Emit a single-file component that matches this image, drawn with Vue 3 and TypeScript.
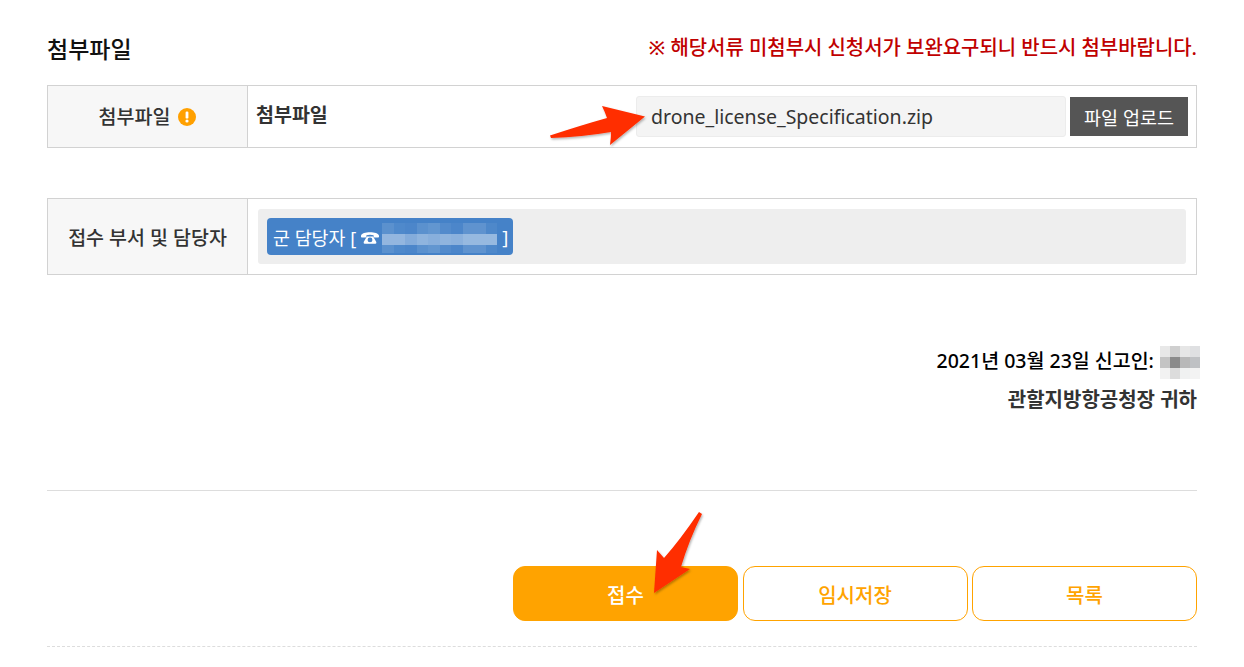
<template>
  <div class="page">
    <div class="head">
      <h3 class="title">첨부파일</h3>
      <p class="notice">※ 해당서류 미첨부시 신청서가 보완요구되니 반드시 첨부바랍니다.</p>
    </div>

    <div class="row row-file">
      <div class="label label-file">
        첨부파일
        <svg class="warn" width="18" height="18" viewBox="0 0 18 18">
          <circle cx="9" cy="9" r="9" fill="#ffa000" />
          <rect x="7.6" y="3.6" width="2.8" height="7" rx="1.2" fill="#fff" />
          <circle cx="9" cy="13" r="1.6" fill="#fff" />
        </svg>
      </div>
      <div class="cell cell-file">
        <strong class="file-name">첨부파일</strong>
        <div class="file-box">
          <div class="file-input">drone_license_Specification.zip</div>
          <button class="upload">파일 업로드</button>
        </div>
      </div>
    </div>

    <div class="row row-dept">
      <div class="label">접수 부서 및 담당자</div>
      <div class="cell">
        <div class="dept-box">
          <span class="tag">
            군 담당자 [
            <svg class="phone" width="18" height="13" viewBox="0 0 20 14">
              <path fill="#fff" d="M0 5C1 0 19 0 20 5V6.5Q20 7 19 7H15Q14 7 14 6V4.5C12 3.6 8 3.6 6 4.5V6Q6 7 5 7H1Q0 7 0 6.5Z" />
              <path fill="#fff" fill-rule="evenodd" d="M6.5 6H13.5L17 12Q17.5 14 16 14H4Q2.5 14 3 12ZM10 7A2.7 2.7 0 1 0 10 12.4A2.7 2.7 0 1 0 10 7Z" />
            </svg>
            <span class="blur blur-tag">
              <i v-for="(c, i) in tagBlur" :key="i" :style="{ background: c }"></i>
            </span>
            ]
          </span>
        </div>
      </div>
    </div>

    <div class="sign">
      <p class="date">
        2021년 03월 23일 신고인:
        <span class="blur blur-name">
          <i v-for="(c, i) in nameBlur" :key="i" :style="{ background: c }"></i>
        </span>
      </p>
      <p class="to">관할지방항공청장 귀하</p>
    </div>

    <div class="actions">
      <button class="btn primary">접수</button>
      <button class="btn">임시저장</button>
      <button class="btn">목록</button>
    </div>

    <svg class="arrow" width="1244" height="667" viewBox="0 0 1244 667">
      <defs>
        <filter id="sh" x="-20%" y="-20%" width="140%" height="140%">
          <feDropShadow dx="1" dy="1.5" stdDeviation="1" flood-color="#000" flood-opacity="0.3" />
        </filter>
      </defs>
      <path d="M550 135.500 Q582 125 607 118 Q605 112 602 106 L645 116.500 L610 145 Q611 138 611 132 Q582 137 551 138Z" fill="#ff2d00" filter="url(#sh)" />
      <path d="M699 512 L702 514 Q689 540 681 567 L690 569 L654 593 L657 550 L664 558 Q680 540 699 512Z" fill="#ff2d00" filter="url(#sh)" />
    </svg>
  </div>
</template>

<script setup lang="ts">
const tagCols = [0.12, 0.06, 0.04, 0.12, 0.16, 0.08, 0.04, 0.14, 0.14, 0.05]
const tagMid = [0.42, 0.42, 0.34, 0.4, 0.36, 0.4, 0.38, 0.44, 0.44, 0.44]
const mix = (a: number) => `rgba(255,255,255,${a})`

// три ряда пикселей, средний светлее
const tagBlur: string[] = [...tagCols.map(mix), ...tagMid.map(mix), ...tagCols.map(mix)]

const nameBlur: string[] = [
  '#e8e8e8', '#cfcfcf', '#e6e6e6', '#dfe0e2',
  '#c4c4c4', '#8a8a8a', '#b8b8b8', '#bfc1c4',
  '#f2f2f2', '#dcdcdc', '#f0f1f1', '#f3f3f3',
]
</script>

<style>
html,
body {
  background: #fff;
}
</style>

<style scoped>
.page {
  position: relative;
  width: 1244px;
  height: 667px;
  box-sizing: border-box;
  padding: 0 47px;
  overflow: hidden;
  font-family: "Noto Sans", "Noto Sans CJK KR", sans-serif;
  color: #333;
}
.head {
  display: flex;
  justify-content: space-between;
  align-items: center;
  height: 85px;
  padding-top: 8px;
  box-sizing: border-box;
}
.title {
  margin: 2px 0 0;
  font-size: 23px;
  font-weight: 500;
  color: #111;
}
.notice {
  margin: -1px 0 0;
  font-size: 19.95px;
  font-weight: 500;
  color: #c00000;
}
.row {
  display: grid;
  grid-template-columns: 200px 1fr;
  border: 1px solid #d2d2d2;
}
.row-file {
  height: 63px;
  box-sizing: border-box;
}
.row-dept {
  height: 77px;
  box-sizing: border-box;
  margin-top: 50px;
}
.label {
  display: flex;
  align-items: center;
  justify-content: center;
  gap: 8px;
  background: #f7f7f7;
  border-right: 1px solid #d2d2d2;
  font-size: 19.5px;
  font-weight: 500;
  color: #333;
  box-sizing: border-box;
}
.label-file {
  padding-bottom: 2px;
}
.warn {
  margin-top: 2px;
}
.cell {
  padding: 10px;
}
.cell-file {
  display: flex;
  justify-content: space-between;
  padding: 10px 8px;
}
.file-name {
  font-size: 19.5px;
  font-weight: 700;
  line-height: 38px;
}
.file-box {
  display: flex;
  gap: 4px;
  align-items: center;
}
.file-input {
  width: 430px;
  height: 41px;
  box-sizing: border-box;
  padding-left: 14px;
  background: #f4f4f4;
  border: 1px solid #ececec;
  border-radius: 3px;
  font-size: 19.5px;
  line-height: 39px;
  color: #333;
}
.upload {
  width: 118px;
  height: 39px;
  padding: 0;
  border: 0;
  background: #555;
  color: #fff;
  font-family: inherit;
  font-size: 18.5px;
}
.dept-box {
  height: 55px;
  box-sizing: border-box;
  padding: 9px;
  background: #eee;
  border-radius: 3px;
}
.tag {
  display: inline-flex;
  align-items: center;
  gap: 3px;
  height: 37px;
  padding: 0 5px 0 6px;
  background: #4582c8;
  border-radius: 4px;
  color: #fff;
  font-size: 18.4px;
  white-space: nowrap;
}
.phone {
  margin: 2px 0 0 2px;
}
.blur {
  display: inline-grid;
}
.blur i {
  display: block;
}
.blur-tag {
  grid-template-columns: repeat(10, 11.5px);
  grid-template-rows: 11px 11px 8px;
  margin: 2px 2px 0 0;
}
.blur-name {
  grid-template-columns: repeat(4, 10px);
  grid-template-rows: repeat(3, 11px);
  vertical-align: middle;
  margin-left: 1px;
}
.sign {
  display: flex;
  flex-direction: column;
  align-items: flex-end;
  margin-top: 70px;
  margin-right: -3px;
}
.date {
  margin: 0;
  font-size: 19.5px;
  font-weight: 500;
  line-height: 32px;
  color: #000;
}
.to {
  margin: 5px 3px 0 0;
  font-size: 20px;
  font-weight: 700;
  line-height: 32px;
}
.actions {
  display: flex;
  justify-content: flex-end;
  gap: 4.5px;
  margin-top: 74px;
  padding: 75px 0 25px;
  border-top: 1px solid #ddd;
  border-bottom: 1px dashed #ddd;
}
.btn {
  width: 225px;
  height: 55px;
  padding: 1px 0 0;
  box-sizing: border-box;
  border: 1px solid #ffa300;
  border-radius: 12px;
  background: #fff;
  color: #ffa300;
  font-family: inherit;
  font-size: 20px;
  font-weight: 500;
}
.primary {
  background: #ffa300;
  color: #fff;
}
.arrow {
  position: absolute;
  left: 0;
  top: 0;
  pointer-events: none;
}
</style>
